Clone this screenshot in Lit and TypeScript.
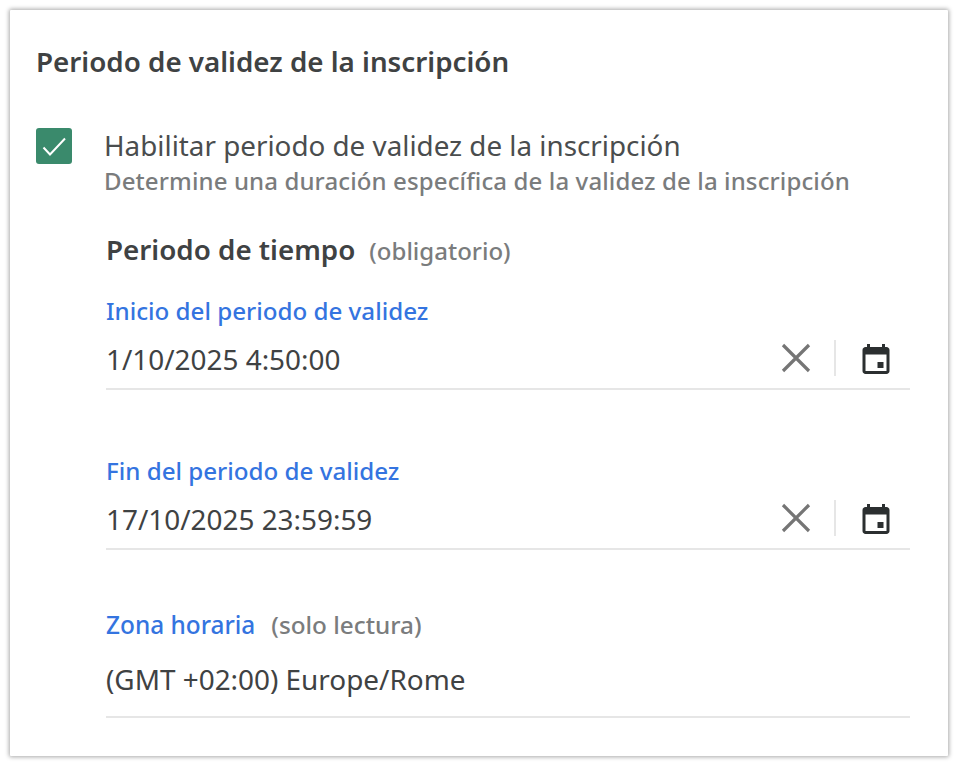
import { LitElement, html, css } from "lit";
import { customElement } from "lit/decorators.js";

const field = (label: unknown, value: string, cls: string, icons: boolean) => html`
  <div class="field ${cls}">
    <div class="label">${label}</div>
    <div class="input">
      <span class="value">${value}</span>
      ${icons
        ? html`<span class="icons">
            <svg class="x" width="32" height="32" viewBox="0 0 32 32"><path d="M3 3 L29 29 M29 3 L3 29" fill="none" stroke="#757575" stroke-width="3.2"/></svg>
            <span class="sep"></span>
            <svg class="cal" width="36" height="36" viewBox="0 0 24 24"><path fill="#2b2f30" d="M19 4h-1V2h-2v2H8V2H6v2H5c-1.1 0-2 .9-2 2v14c0 1.1.9 2 2 2h14c1.1 0 2-.9 2-2V6c0-1.1-.9-2-2-2zm0 16H5V9h14v11zm-2-6h-4v4h4v-4z"/></svg>
          </span>`
        : ""}
    </div>
  </div>`;

@customElement("app-root")
export class AppRoot extends LitElement {
  static styles = css`
    :host { display: block; width: 958px; height: 766px; background: #fff; box-sizing: border-box; padding: 10px; font-family: "Noto Sans", "Open Sans", sans-serif; color: #3c3f40; }
    .card { box-sizing: border-box; width: 938px; height: 746px; background: #fff; box-shadow: 0 0 4px 1px rgba(0,0,0,.34); border-radius: 1px; padding: 32px 38px 0 26px; }
    h2 { margin: 0; font-size: 27.75px; line-height: 38px; font-weight: 600; color: #3f4243; }
    .check { display: flex; margin-top: 47px; gap: 32px; }
    .box { width: 36px; height: 36px; flex: none; background: #3a8a6c; border-radius: 3px; display: flex; align-items: center; justify-content: center; margin-top: 1px; }
    .texts { display: flex; flex-direction: column; }
    .main { font-size: 27.8px; line-height: 36px; color: #4a4d4e; }
    .sub { font-size: 24px; line-height: 34px; font-weight: 500; color: #7a7c7d; letter-spacing: .12px; margin-top: 1px; }
    .body { margin-left: 70px; }
    .head { margin-top: 32px; display: flex; align-items: baseline; gap: 14px; line-height: 38px; }
    .head b { font-size: 27.75px; font-weight: 600; color: #3f4243; }
    .note { font-size: 24px; font-weight: 500; color: #7a7c7d; }
    .field { display: flex; flex-direction: column; }
    .label { font-size: 24.15px; line-height: 32px; font-weight: 500; color: #3474e0; display: flex; align-items: baseline; gap: 16px; }
    .label .note { font-size: 24.3px; }
    .label .zone { font-size: 24.4px; }
    .input { height: 63px; box-sizing: border-box; border-bottom: 2px solid #e6e6e6; display: flex; align-items: center; justify-content: space-between; }
    .value { font-size: 27.9px; color: #3f4243; padding-top: 3px; }
    .icons { display: flex; align-items: center; margin-right: 16px; }
    .sep { width: 2px; height: 36px; background: #e6e6e6; margin: 0 22px 0 22px; }
    .x { display: block; }
    .cal { display: block; margin-top: 2px; }
    .f1 { margin-top: 25px; }
    .f2 { margin-top: 65px; }
    .f3 { margin-top: 59px; }
    .f3 .input { height: 77px; }
    .f3 .value { padding-top: 1px; }
  `;

  render() {
    return html`<div class="card">
      <h2>Periodo de validez de la inscripción</h2>
      <div class="check">
        <div class="box">
          <svg width="36" height="36" viewBox="0 0 36 36"><path d="M7.5 19.5 L14 26.5 L29 10.5" fill="none" stroke="#fff" stroke-width="2"/></svg>
        </div>
        <div class="texts">
          <span class="main">Habilitar periodo de validez de la inscripción</span>
          <span class="sub">Determine una duración específica de la validez de la inscripción</span>
        </div>
      </div>
      <div class="body">
        <div class="head"><b>Periodo de tiempo</b><span class="note">(obligatorio)</span></div>
        ${field("Inicio del periodo de validez", "1/10/2025 4:50:00", "f1", true)}
        ${field("Fin del periodo de validez", "17/10/2025 23:59:59", "f2", true)}
        ${field(html`<span class="zone">Zona horaria</span><span class="note">(solo lectura)</span>`, "(GMT +02:00) Europe/Rome", "f3", false)}
      </div>
    </div>`;
  }
}
